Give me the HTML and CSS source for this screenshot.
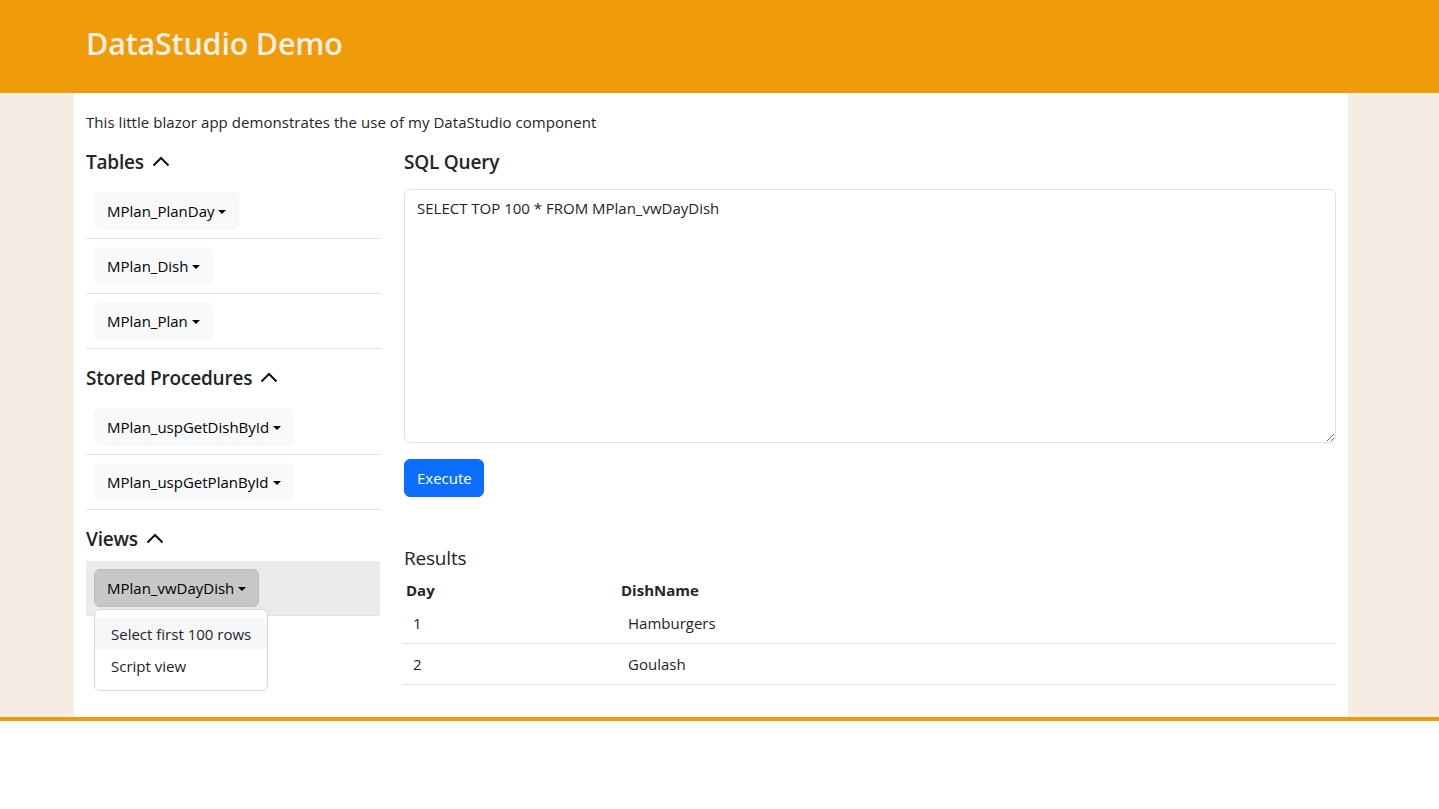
FILE: index.html
```html
<!DOCTYPE html>
<html lang="en">
<head>
<meta charset="utf-8">
<title>DataStudio Demo</title>
<link rel="stylesheet" href="styles.css">
</head>
<body>
<header class="topbar">
  <div class="topbar-inner">
    <h1 class="brand">DataStudio Demo</h1>
  </div>
</header>
<div class="page">
  <main class="container">
    <p class="intro">This little blazor app demonstrates the use of my DataStudio component</p>
    <div class="row">
      <aside class="sidebar">
        <h5 class="section-title">Tables <svg class="chev" viewBox="0 0 18 11" width="18" height="11"><path d="M1.5 9.5 L9 2 L16.5 9.5" fill="none" stroke="#111" stroke-width="2"/></svg></h5>
        <div class="obj-row"><button class="btn-obj">MPlan_PlanDay<span class="caret"></span></button></div>
        <div class="obj-row"><button class="btn-obj">MPlan_Dish<span class="caret"></span></button></div>
        <div class="obj-row"><button class="btn-obj">MPlan_Plan<span class="caret"></span></button></div>

        <h5 class="section-title">Stored Procedures <svg class="chev" viewBox="0 0 18 11" width="18" height="11"><path d="M1.5 9.5 L9 2 L16.5 9.5" fill="none" stroke="#111" stroke-width="2"/></svg></h5>
        <div class="obj-row"><button class="btn-obj">MPlan_uspGetDishById<span class="caret"></span></button></div>
        <div class="obj-row"><button class="btn-obj">MPlan_uspGetPlanById<span class="caret"></span></button></div>

        <h5 class="section-title">Views <svg class="chev" viewBox="0 0 18 11" width="18" height="11"><path d="M1.5 9.5 L9 2 L16.5 9.5" fill="none" stroke="#111" stroke-width="2"/></svg></h5>
        <div class="obj-row active">
          <div class="dropdown">
            <button class="btn-obj open">MPlan_vwDayDish<span class="caret"></span></button>
            <ul class="dropdown-menu">
              <li class="dropdown-item hover">Select first 100 rows</li>
              <li class="dropdown-item">Script view</li>
            </ul>
          </div>
        </div>
      </aside>
      <section class="workspace">
        <h5 class="section-title sql-title">SQL Query</h5>
        <textarea class="query" spellcheck="false">SELECT TOP 100 * FROM MPlan_vwDayDish</textarea>
        <button class="btn-primary">Execute</button>
        <h5 class="results-title">Results</h5>
        <table class="results">
          <thead>
            <tr><th class="c1">Day</th><th>DishName</th></tr>
          </thead>
          <tbody>
            <tr><td>1</td><td>Hamburgers</td></tr>
            <tr><td>2</td><td>Goulash</td></tr>
          </tbody>
        </table>
      </section>
    </div>
  </main>
</div>
<footer class="footer"></footer>
</body>
</html>
```
FILE: styles.css
```css
* { box-sizing: border-box; }
html, body { margin: 0; padding: 0; }
body {
  font-family: "Open Sans", "Noto Sans", sans-serif;
  font-size: 15px;
  line-height: 24px;
  color: #212529;
  background: #ffffff;
}
.topbar {
  background: #f09b09;
  height: 93px;
}
.topbar-inner {
  width: 1274px;
  margin: 0 0 0 74px;
  padding: 0 12px 8px;
  height: 93px;
  display: flex;
  align-items: center;
}
.brand {
  margin: 0;
  font-size: 30.5px;
  font-weight: 600;
  color: #f6efe6;
  line-height: 40px;
  letter-spacing: -0.2px;
}
.page {
  background: #f5ede4;
}
.container {
  width: 1274px;
  margin: 0 0 0 74px;
  background: #ffffff;
  padding: 17px 12px 25px;
  min-height: 624px;
}
.intro {
  margin: 0 0 16px;
  letter-spacing: 0.05px;
}
.row {
  display: flex;
  gap: 24px;
}
.sidebar {
  width: 294px;
  flex: none;
}
.workspace {
  flex: 1;
  min-width: 0;
}
.section-title {
  margin: 17px 0 10px;
  font-size: 19px;
  font-weight: 600;
  line-height: 24px;
  display: flex;
  align-items: center;
  gap: 8px;
  letter-spacing: -0.2px;
}
.sidebar .section-title:first-child { margin-top: 0; }
.sql-title { margin-top: 0; margin-bottom: 15px; }
.chev { display: block; margin-top: -1px; }
.obj-row {
  padding: 8px;
  border-bottom: 1px solid #dee2e6;
}
.obj-row.active {
  background: #ebebeb;
}
.btn-obj {
  font-family: inherit;
  font-size: 15px;
  line-height: 24px;
  color: #000;
  background: #f8f9fa;
  border: 1px solid #f8f9fa;
  border-radius: 6px;
  padding: 6px 12px;
  display: inline-flex;
  align-items: center;
  cursor: pointer;
}
.btn-obj.open {
  background: #c6c7c8;
  border-color: #b9babb;
}
.caret {
  display: inline-block;
  margin-left: 4px;
  width: 0;
  height: 0;
  border-top: 4.5px solid #000;
  border-left: 4px solid transparent;
  border-right: 4px solid transparent;
  margin-top: 1px;
}
.dropdown { position: relative; display: inline-block; }
.dropdown-menu {
  position: absolute;
  top: 40px;
  left: 0;
  width: 174px;
  margin: 0;
  padding: 8px 0;
  list-style: none;
  background: #fff;
  border: 1px solid #d5d7d9;
  border-radius: 6px;
  z-index: 10;
}
.dropdown-item {
  padding: 4px 16px;
  line-height: 24px;
  color: #212529;
  white-space: nowrap;
}
.dropdown-item.hover { background: #f6f7f8; }
.query {
  display: block;
  width: 100%;
  height: 254px;
  font-family: inherit;
  font-size: 15px;
  line-height: 24px;
  color: #212529;
  padding: 6px 12px;
  border: 1px solid #dee2e6;
  border-radius: 6px;
  resize: vertical;
}
.btn-primary {
  margin-top: 16px;
  font-family: inherit;
  font-size: 15px;
  line-height: 24px;
  color: #fff;
  background: #0d6efd;
  border: 1px solid #0d6efd;
  border-radius: 6px;
  padding: 6px 12px;
  width: 80px;
}
.results-title {
  margin: 49px 0 8px;
  font-size: 19px;
  font-weight: 500;
  line-height: 24px;
  letter-spacing: -0.2px;
}
.results {
  width: 100%;
  border-collapse: collapse;
}
.results th {
  text-align: left;
  font-weight: 700;
  padding: 0 2px 1px;
  line-height: 24px;
}
.results th.c1 { width: 215px; }
.results td {
  padding: 8px 9px;
  border-bottom: 1px solid #dee2e6;
}
.footer {
  border-top: 4px solid #f09b09;
  height: 92px;
  background: #fff;
}
```
